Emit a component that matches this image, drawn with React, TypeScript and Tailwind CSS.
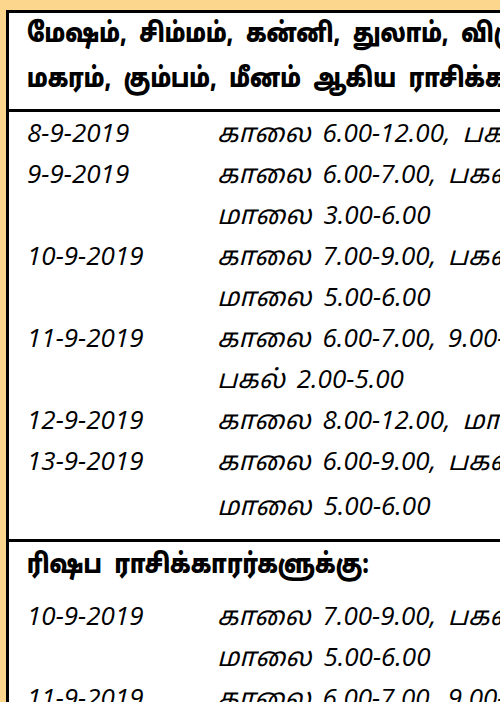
const rows1 = [
  ["8-9-2019", "காலை 6.00-12.00, பகல் 1.00-3.00"],
  ["9-9-2019", "காலை 6.00-7.00, பகல் 12.00-1.00"],
  ["", "மாலை 3.00-6.00"],
  ["10-9-2019", "காலை 7.00-9.00, பகல் 1.00-2.00"],
  ["", "மாலை 5.00-6.00"],
  ["11-9-2019", "காலை 6.00-7.00, 9.00-12.00"],
  ["", "பகல் 2.00-5.00"],
  ["12-9-2019", "காலை 8.00-12.00, மாலை 3.00-6.00"],
  ["13-9-2019", "காலை 6.00-9.00, பகல் 1.00-3.00"],
];

const rows2 = [
  ["10-9-2019", "காலை 7.00-9.00, பகல் 1.00-2.00"],
  ["", "மாலை 5.00-6.00"],
  ["11-9-2019", "காலை 6.00-7.00, 9.00-12.00"],
];

const tamilBold = "font-['Noto_Sans_Tamil','Lohit_Tamil','Noto_Sans',sans-serif] font-black";
const rowFont = "font-['Open_Sans','Noto_Sans_Tamil','Lohit_Tamil',sans-serif] font-normal italic";

function Row({ date, time, className = "" }: { date: string; time: string; className?: string }) {
  return (
    <div className={`flex h-[41px] items-center text-[26px] text-black ${rowFont} ${className}`}>
      <div className="w-[208px] shrink-0 pl-[18px]">{date}</div>
      <div className="whitespace-nowrap [word-spacing:5px]">{time}</div>
    </div>
  );
}

export default function App() {
  return (
    <div className="h-[702px] w-[500px] overflow-hidden bg-[#fcd68c] pl-[6px] pt-[10px]">
      <div className="w-[620px] border-[3px] border-r-0 border-black bg-white">
        <div className={`whitespace-nowrap pl-[18px] pb-[6px] text-[27px] leading-[45px] text-black ${tamilBold}`}>
          <div className="origin-left scale-x-[0.79] [word-spacing:9px]">
            மேஷம், சிம்மம், கன்னி, துலாம், விருச்சிகம், தனுசு,
          </div>
          <div className="origin-left scale-x-[0.79] [word-spacing:9px]">
            மகரம், கும்பம், மீனம் ஆகிய ராசிக்காரர்களுக்கு:
          </div>
        </div>
        <div className="border-t-[3px] border-black pb-[13px]">
          {rows1.map(([d, t], i) => (
            <Row key={i} date={d} time={t} />
          ))}
          <Row date="" time="மாலை 5.00-6.00" className="mt-[4px]" />
        </div>
        <div className="border-t-[3px] border-black">
          <div className={`whitespace-nowrap pl-[18px] pt-[5px] text-[27px] leading-[40px] text-black ${tamilBold}`}>
            <div className="origin-left scale-x-[0.79] [word-spacing:9px]">ரிஷப ராசிக்காரர்களுக்கு:</div>
          </div>
          <div className="pt-[8px]">
            {rows2.map(([d, t], i) => (
              <Row key={i} date={d} time={t} />
            ))}
          </div>
        </div>
      </div>
    </div>
  );
}
